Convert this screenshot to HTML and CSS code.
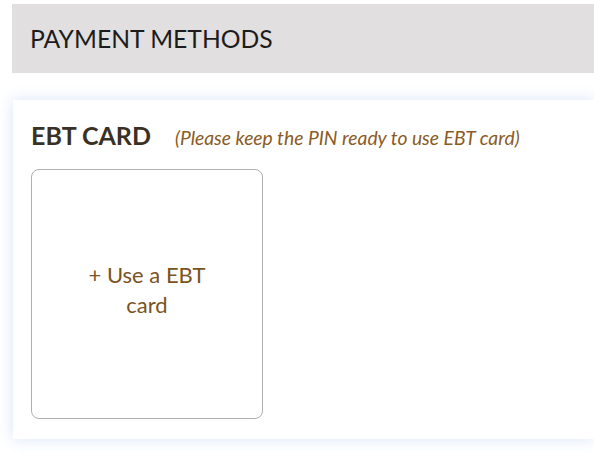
FILE: index.html
```html
<!DOCTYPE html>
<html>
<head>
<meta charset="utf-8">
<link rel="stylesheet" href="styles.css">
</head>
<body>
<div class="header"><h1 class="header-title">PAYMENT METHODS</h1></div>
<div class="card">
  <div class="card-title-row">
    <h2 class="card-title">EBT CARD</h2>
    <span class="card-note">(Please keep the PIN ready to use EBT card)</span>
  </div>
  <div class="add-box">
    <span class="add-label">+ Use a EBT<br>card</span>
  </div>
</div>
</body>
</html>
```
FILE: styles.css
```css
html, body {
  margin: 0;
  padding: 0;
  background: #ffffff;
  font-family: "Lato", "Open Sans", sans-serif;
}
body {
  width: 594px;
  height: 453px;
  overflow: hidden;
}
.header {
  margin: 4px 0 0 12px;
  height: 69px;
  background: #e1dfdf;
  display: flex;
  align-items: center;
  padding-left: 18px;
}
.header-title {
  margin: 0;
  font-size: 24.7px;
  font-weight: 400;
  color: #1c1c1c;
}
.card {
  margin: 27px 0 0 13px;
  height: 339px;
  background: #ffffff;
  box-shadow: 0 0 14px rgba(170, 195, 240, 0.45);
  padding: 20px 0 0 18px;
  box-sizing: border-box;
}
.card-title-row {
  display: flex;
  align-items: baseline;
  height: 30px;
}
.card-title {
  margin: 0;
  font-size: 25px;
  font-weight: 700;
  color: #3a3125;
}
.card-note {
  margin-left: 24px;
  font-size: 19.3px;
  font-style: italic;
  color: #8a5b24;
}
.add-box {
  margin-top: 19px;
  width: 232px;
  height: 250px;
  box-sizing: border-box;
  border: 1.5px solid #b0b0b0;
  border-radius: 8px;
  display: flex;
  align-items: center;
  justify-content: center;
  padding-bottom: 8px;
}
.add-label {
  text-align: center;
  font-size: 22px;
  line-height: 30px;
  color: #7b5221;
}
```
